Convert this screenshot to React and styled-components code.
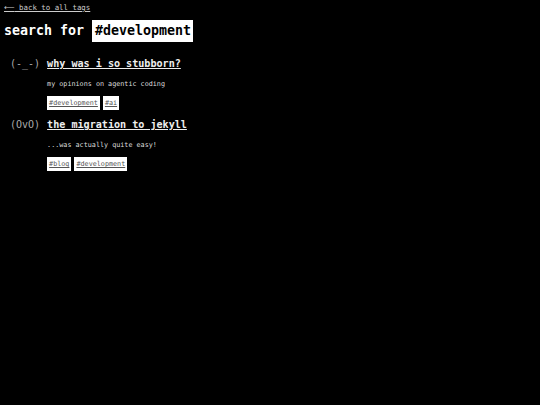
import styled, { createGlobalStyle } from 'styled-components'

const GlobalStyle = createGlobalStyle`
  html, body {
    margin: 0;
    padding: 0;
    background: #000000;
    height: 100%;
  }
  body {
    font-family: "DejaVu Sans Mono", "Liberation Mono", monospace;
    color: #eeeeee;
  }
`

const Page = styled.div`
  padding: 3px 4px;
`

const BackLink = styled.a`
  display: block;
  font-size: 7.4px;
  line-height: 10px;
  color: #cccccc;
  text-decoration: underline;
`

const Arrow = styled.span`
  font-family: "DejaVu Sans", sans-serif;
`

const Heading = styled.h1`
  margin: 7px 0 15px;
  font-size: 13.3px;
  font-weight: bold;
  line-height: 16px;
  color: #ffffff;
  display: flex;
  align-items: center;
`

const Query = styled.span`
  display: inline-block;
  padding: 3px 2px 3px 3px;
  background: #ffffff;
  color: #000000;
`

const PostList = styled.div`
  display: flex;
  flex-direction: column;
  gap: 8px;
`

const Post = styled.div`
  display: flex;
  gap: 7px;
  padding-left: 6px;
`

const Face = styled.div`
  font-size: 10px;
  line-height: 14px;
  color: #aaaaaa;
  white-space: pre;
`

const Body = styled.div`
  display: flex;
  flex-direction: column;
`

const Title = styled.a`
  font-size: 10.1px;
  font-weight: bold;
  line-height: 14px;
  color: #eeeeee;
  text-decoration: underline;
`

const Desc = styled.p`
  margin: 8px 0 7px;
  font-size: 6.75px;
  line-height: 10px;
  color: #dddddd;
`

const Tags = styled.div`
  display: flex;
  gap: 3px;
`

const Tag = styled.a`
  display: inline-block;
  background: #ffffff;
  color: #555555;
  font-size: 6.75px;
  line-height: 14px;
  padding: 0 2px;
  text-decoration: underline;
`

const posts = [
  { face: '(-_-)', title: 'why was i so stubborn?', desc: 'my opinions on agentic coding', tags: ['#development', '#ai'] },
  { face: '(OvO)', title: 'the migration to jekyll', desc: '...was actually quite easy!', tags: ['#blog', '#development'] },
]

export default function App() {
  return (
    <>
      <GlobalStyle />
      <Page>
        <BackLink>
          <Arrow>⟵</Arrow> back to all tags
        </BackLink>
        <Heading>
          search for&nbsp;<Query>#development</Query>
        </Heading>
        <PostList>
          {posts.map((p) => (
            <Post key={p.title}>
              <Face>{p.face}</Face>
              <Body>
                <Title>{p.title}</Title>
                <Desc>{p.desc}</Desc>
                <Tags>
                  {p.tags.map((t) => (
                    <Tag key={t}>{t}</Tag>
                  ))}
                </Tags>
              </Body>
            </Post>
          ))}
        </PostList>
      </Page>
    </>
  )
}
